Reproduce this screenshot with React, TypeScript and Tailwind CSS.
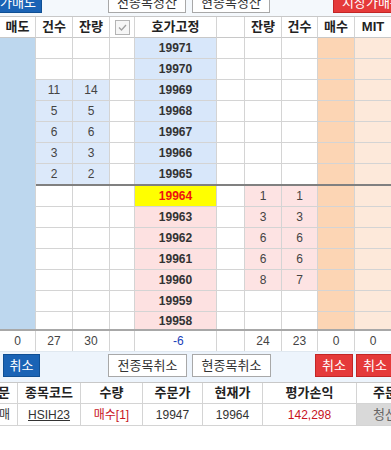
import React from "react";

const W = [
  "w-[36px]",
  "w-[37px]",
  "w-[37px]",
  "w-[25px]",
  "w-[82px]",
  "w-[28px]",
  "w-[37px]",
  "w-[36px]",
  "w-[37px]",
  "w-[36px]",
];

const KR = "font-['Liberation_Sans','Noto_Sans_CJK_KR',sans-serif]";

type CellProps = {
  i: number;
  bg?: string;
  bb?: string;
  className?: string;
  children?: React.ReactNode;
};

function Cell({ i, bg = "bg-white", bb = "border-b-[#d4d4d4]", className = "", children }: CellProps) {
  const br = i === 9 ? "" : "border-r border-r-[#d4d4d4]";
  return (
    <div
      className={`${W[i]} ${bg} ${br} border-b ${bb} shrink-0 flex items-center justify-center ${className}`}
    >
      {children}
    </div>
  );
}

const ask: { p: number; c?: number; q?: number }[] = [
  { p: 19971 },
  { p: 19970 },
  { p: 19969, c: 11, q: 14 },
  { p: 19968, c: 5, q: 5 },
  { p: 19967, c: 6, q: 6 },
  { p: 19966, c: 3, q: 3 },
  { p: 19965, c: 2, q: 2 },
];

const bid: { p: number; q?: number; c?: number }[] = [
  { p: 19964, q: 1, c: 1 },
  { p: 19963, q: 3, c: 3 },
  { p: 19962, q: 6, c: 6 },
  { p: 19961, q: 6, c: 6 },
  { p: 19960, q: 8, c: 7 },
  { p: 19959 },
  { p: 19958 },
];

const SELL = "bg-[#bdd7ee]";
const SELLB = "border-b-[#bdd7ee]";
const ASKQ = "bg-[#dce9fa]";
const ASKP = "bg-[#d8e7fa]";
const BIDP = "bg-[#fde1e1]";
const BIDQ = "bg-[#fde3e3]";
const BUY = "bg-[#fcd5b4]";
const MIT = "bg-[#fde9da]";

function Check() {
  return (
    <div className="w-[15px] h-[15px] border border-[#b4b4b4] bg-[#f6f6f6] flex items-center justify-center">
      <svg width="11" height="11" viewBox="0 0 11 11">
        <path d="M2 5.5 L4.5 8 L9 3" stroke="#a0a0a0" strokeWidth="1.3" fill="none" />
      </svg>
    </div>
  );
}

export default function App() {
  const num = "text-[12px] text-[#444]";
  const price = "text-[12px] font-bold text-[#333]";
  return (
    <div className={`w-[391px] h-[450px] overflow-hidden bg-white ${KR}`}>
      {/* top toolbar (cut off) */}
      <div className="h-[16px] overflow-hidden bg-[#f4f8fc] flex items-end pb-[3px] relative">
        <div className="flex items-end w-full">
          <div className="ml-[-30px] w-[72px] h-[20px] bg-[#1a63b5] border border-[#0f4f94] text-white text-[13px] flex items-center justify-center shrink-0">
            시장가매도
          </div>
          <div className="ml-[66px] w-[78px] h-[20px] bg-white border border-[#a8a8a8] text-[#333] text-[13px] flex items-center justify-center shrink-0">
            전종목청산
          </div>
          <div className="ml-[6px] w-[78px] h-[20px] bg-white border border-[#a8a8a8] text-[#333] text-[13px] flex items-center justify-center shrink-0">
            현종목청산
          </div>
          <div className="ml-[63px] w-[72px] h-[20px] bg-[#e53a3a] border border-[#c22626] text-white text-[13px] flex items-center justify-start pl-[8px] shrink-0">
            시장가매수
          </div>
        </div>
      </div>

      {/* header */}
      <div className="flex h-[22px] border-t border-t-[#c8c8c8] text-[13px] font-bold text-[#222]">
        <Cell i={0} bb="border-b-[#c8c8c8]">매도</Cell>
        <Cell i={1} bb="border-b-[#c8c8c8]">건수</Cell>
        <Cell i={2} bb="border-b-[#c8c8c8]">잔량</Cell>
        <Cell i={3} bb="border-b-[#c8c8c8]">
          <Check />
        </Cell>
        <Cell i={4} bb="border-b-[#c8c8c8]">호가고정</Cell>
        <Cell i={5} bb="border-b-[#c8c8c8]" />
        <Cell i={6} bb="border-b-[#c8c8c8]">잔량</Cell>
        <Cell i={7} bb="border-b-[#c8c8c8]">건수</Cell>
        <Cell i={8} bb="border-b-[#c8c8c8]">매수</Cell>
        <Cell i={9} bb="border-b-[#c8c8c8]">MIT</Cell>
      </div>

      {/* ask rows */}
      {ask.map((r, k) => {
        const last = k === ask.length - 1;
        const has = r.c !== undefined;
        const bb = last ? "border-b-0" : "border-b-[#d4d4d4]";
        return (
          <div key={r.p} className={`flex ${last ? "h-[20px]" : "h-[21px]"}`}>
            <Cell i={0} bg={SELL} bb={last ? "border-b-0" : SELLB} />
            <Cell i={1} bg={has ? ASKQ : "bg-white"} bb={bb} className={num}>
              {r.c}
            </Cell>
            <Cell i={2} bg={has ? ASKQ : "bg-white"} bb={bb} className={num}>
              {r.q}
            </Cell>
            <Cell i={3} bb={bb} />
            <Cell i={4} bg={ASKP} bb={bb} className={price}>
              {r.p}
            </Cell>
            <Cell i={5} bb={bb} />
            <Cell i={6} bb={bb} />
            <Cell i={7} bb={bb} />
            <Cell i={8} bg={BUY} bb={bb} />
            <Cell i={9} bg={MIT} bb={bb} />
          </div>
        );
      })}

      {/* divider */}
      <div className="flex h-[2px]">
        <div className={`w-[36px] ${SELL} border-r border-r-[#d4d4d4] shrink-0`} />
        <div className="flex-1 bg-[#808080]" />
      </div>

      {/* bid rows */}
      {bid.map((r, k) => {
        const last = k === bid.length - 1;
        const has = r.c !== undefined;
        const bb = last ? "border-b-0" : "border-b-[#d4d4d4]";
        const isCur = k === 0;
        return (
          <div key={r.p} className={`flex ${last ? "h-[17px]" : "h-[21px]"}`}>
            <Cell i={0} bg={SELL} bb={last ? "border-b-0" : SELLB} />
            <Cell i={1} bb={bb} />
            <Cell i={2} bb={bb} />
            <Cell i={3} bb={bb} />
            <Cell
              i={4}
              bg={isCur ? "bg-[#ffff00]" : BIDP}
              bb={bb}
              className={isCur ? "text-[12px] font-bold text-[#ee1111]" : price}
            >
              {r.p}
            </Cell>
            <Cell i={5} bb={bb} />
            <Cell i={6} bg={has ? BIDQ : "bg-white"} bb={bb} className={num}>
              {r.q}
            </Cell>
            <Cell i={7} bg={has ? BIDQ : "bg-white"} bb={bb} className={num}>
              {r.c}
            </Cell>
            <Cell i={8} bg={BUY} bb={bb} />
            <Cell i={9} bg={MIT} bb={bb} />
          </div>
        );
      })}

      <div className="h-[2px] bg-[#a8a8a8]" />

      {/* totals */}
      <div className="flex h-[20px]">
        <Cell i={0} bb="border-b-0" className={num}>0</Cell>
        <Cell i={1} bb="border-b-0" className={num}>27</Cell>
        <Cell i={2} bb="border-b-0" className={num}>30</Cell>
        <Cell i={3} bb="border-b-0" />
        <Cell i={4} bb="border-b-0" className="text-[12px] text-[#1a3fb8] !justify-start pl-[38px]">
          -6
        </Cell>
        <Cell i={5} bb="border-b-0" />
        <Cell i={6} bb="border-b-0" className={num}>24</Cell>
        <Cell i={7} bb="border-b-0" className={num}>23</Cell>
        <Cell i={8} bb="border-b-0" className={num}>0</Cell>
        <Cell i={9} bb="border-b-0" className={num}>0</Cell>
      </div>

      {/* bottom toolbar */}
      <div className="h-[31px] bg-[#edf4fc] flex items-start pt-[2px] border-t border-t-[#e0e8f0]">
        <div className="ml-[3px] w-[37px] h-[23px] bg-[#1a63b5] border border-[#0f4f94] text-white text-[13px] flex items-center justify-center shrink-0">
          취소
        </div>
        <div className="ml-[68px] w-[79px] h-[23px] bg-white border border-[#a8a8a8] text-[#333] text-[13px] flex items-center justify-center shrink-0">
          전종목취소
        </div>
        <div className="ml-[5px] w-[79px] h-[23px] bg-white border border-[#a8a8a8] text-[#333] text-[13px] flex items-center justify-center shrink-0">
          현종목취소
        </div>
        <div className="ml-[44px] w-[38px] h-[23px] bg-[#e53a3a] border border-[#c22626] text-white text-[13px] flex items-center justify-center shrink-0">
          취소
        </div>
        <div className="ml-[3px] w-[38px] h-[23px] bg-[#e53a3a] border border-[#c22626] text-white text-[13px] flex items-center justify-center shrink-0">
          취소
        </div>
      </div>

      {/* order table */}
      <div className="border-t border-t-[#c8c8c8]">
        <div className="flex h-[21px] text-[13px] font-bold text-[#222] border-b border-b-[#d4d4d4] overflow-hidden">
          <div className="w-[18px] shrink-0 overflow-hidden flex justify-end items-center pr-[7px] border-r border-r-[#d4d4d4]">
            <span className="shrink-0">주문</span>
          </div>
          <div className="w-[63px] shrink-0 flex items-center justify-center border-r border-r-[#d4d4d4]">종목코드</div>
          <div className="w-[62px] shrink-0 flex items-center justify-center border-r border-r-[#d4d4d4]">수량</div>
          <div className="w-[60px] shrink-0 flex items-center justify-center border-r border-r-[#d4d4d4]">주문가</div>
          <div className="w-[60px] shrink-0 flex items-center justify-center border-r border-r-[#d4d4d4]">현재가</div>
          <div className="w-[94px] shrink-0 flex items-center justify-center border-r border-r-[#d4d4d4]">평가손익</div>
          <div className="w-[70px] shrink-0 flex items-center justify-start pl-[16px]">주문구분</div>
        </div>
        <div className="flex h-[22px] text-[12px] text-[#333] border-b border-b-[#d4d4d4] overflow-hidden">
          <div className="w-[18px] shrink-0 overflow-hidden flex justify-end items-center pr-[7px] border-r border-r-[#d4d4d4]">
            <span className="shrink-0">매</span>
          </div>
          <div className="w-[63px] shrink-0 flex items-center justify-center border-r border-r-[#d4d4d4]">
            <span className="underline">HSIH23</span>
          </div>
          <div className="w-[62px] shrink-0 flex items-center justify-center border-r border-r-[#d4d4d4] text-[#c8141e]">
            매수[1]
          </div>
          <div className="w-[60px] shrink-0 flex items-center justify-center border-r border-r-[#d4d4d4]">19947</div>
          <div className="w-[60px] shrink-0 flex items-center justify-center border-r border-r-[#d4d4d4]">19964</div>
          <div className="w-[94px] shrink-0 flex items-center justify-center border-r border-r-[#d4d4d4] text-[#c8141e]">
            142,298
          </div>
          <div className="w-[70px] shrink-0 flex items-center justify-start pl-[16px] bg-[#d9d9d9] text-[#666] text-[13px]">청산</div>
        </div>
      </div>
    </div>
  );
}
